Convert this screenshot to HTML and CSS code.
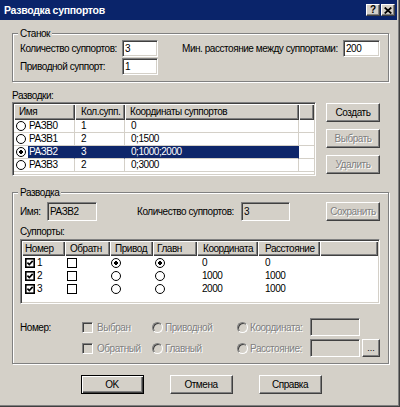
FILE: index.html
```html
<!DOCTYPE html>
<html lang="ru">
<head>
<meta charset="utf-8">
<title>Разводка суппортов</title>
<link rel="stylesheet" href="styles.css">
</head>
<body>
<div class="window">
  <div class="titlebar">
    <span class="title">Разводка суппортов</span>
    <span class="tb-btn help">?</span>
    <span class="tb-btn close"><svg width="8" height="7" viewBox="0 0 8 7"><path d="M0.7 0.5 L7.3 6.5 M7.3 0.5 L0.7 6.5" stroke="#000" stroke-width="1.7" fill="none"/></svg></span>
  </div>

  <div class="content">
    <div class="group stanok">
      <span class="legend">Станок</span>
      <div class="row">
        <span class="lbl w-count">Количество суппортов:</span>
        <span class="edit e-small">3</span>
        <span class="lbl min-dist">Мин. расстояние между суппортами:</span>
        <span class="edit e-dist">200</span>
      </div>
      <div class="row">
        <span class="lbl w-count">Приводной суппорт:</span>
        <span class="edit e-small">1</span>
      </div>
    </div>

    <div class="caption">Разводки:</div>
    <div class="list-area">
      <div class="listview">
        <div class="lv-head">
          <div class="hc">Имя</div>
          <div class="hc hc-count">Кол.супп.</div>
          <div class="hc">Координаты суппортов</div>
          <div class="hc"></div>
        </div>
        <div class="lv-row">
          <div class="c name"><span class="radio"></span><span class="nm">РАЗВ0</span></div>
          <div class="c">1</div><div class="c">0</div><div class="c fill"></div>
        </div>
        <div class="lv-row">
          <div class="c name"><span class="radio"></span><span class="nm">РАЗВ1</span></div>
          <div class="c">2</div><div class="c">0;1500</div><div class="c fill"></div>
        </div>
        <div class="lv-row sel">
          <div class="c name"><span class="radio on"></span><span class="nm">РАЗВ2</span></div>
          <div class="c">3</div><div class="c">0;1000;2000</div><div class="c fill"></div>
        </div>
        <div class="lv-row">
          <div class="c name"><span class="radio"></span><span class="nm">РАЗВ3</span></div>
          <div class="c">2</div><div class="c">0;3000</div><div class="c fill"></div>
        </div>
      </div>
      <div class="btn-col">
        <button class="btn side">Создать</button>
        <button class="btn side dis">Выбрать</button>
        <button class="btn side dis">Удалить</button>
      </div>
    </div>

    <div class="group razv">
      <span class="legend">Разводка</span>
      <div class="row name-row">
        <span class="lbl w-name">Имя:</span>
        <span class="edit ro e-name">РАЗВ2</span>
        <span class="lbl w-cnt2">Количество суппортов:</span>
        <span class="edit ro e-cnt2">3</span>
        <button class="btn side dis save">Сохранить</button>
      </div>
      <div class="caption2">Суппорты:</div>
      <div class="table">
        <div class="tb-head">
          <div class="hc p3">Номер</div>
          <div class="hc p5">Обратн</div>
          <div class="hc p5">Привод</div>
          <div class="hc p4">Главн</div>
          <div class="hc p6">Координата</div>
          <div class="hc p7">Расстояние</div>
          <div class="hc"></div>
        </div>
        <div class="tb-row">
          <div class="t num"><svg class="chk" width="10" height="10" viewBox="0 0 10 10"><rect x="0.8" y="0.8" width="8.4" height="8.4" fill="#fff" stroke="#000" stroke-width="1.6"/><path d="M2.4 4.7 L4.3 6.6 L7.7 2.9" fill="none" stroke="#000" stroke-width="1.7"/></svg>1</div>
          <div class="t p2"><span class="box"></span></div>
          <div class="t p1"><span class="radio on"></span></div>
          <div class="t p2"><span class="radio on"></span></div>
          <div class="t p5">0</div>
          <div class="t p7">0</div>
          <div class="t"></div>
        </div>
        <div class="tb-row">
          <div class="t num"><svg class="chk" width="10" height="10" viewBox="0 0 10 10"><rect x="0.8" y="0.8" width="8.4" height="8.4" fill="#fff" stroke="#000" stroke-width="1.6"/><path d="M2.4 4.7 L4.3 6.6 L7.7 2.9" fill="none" stroke="#000" stroke-width="1.7"/></svg>2</div>
          <div class="t p2"><span class="box"></span></div>
          <div class="t p1"><span class="radio"></span></div>
          <div class="t p2"><span class="radio"></span></div>
          <div class="t p5">1000</div>
          <div class="t p7">1000</div>
          <div class="t"></div>
        </div>
        <div class="tb-row">
          <div class="t num"><svg class="chk" width="10" height="10" viewBox="0 0 10 10"><rect x="0.8" y="0.8" width="8.4" height="8.4" fill="#fff" stroke="#000" stroke-width="1.6"/><path d="M2.4 4.7 L4.3 6.6 L7.7 2.9" fill="none" stroke="#000" stroke-width="1.7"/></svg>3</div>
          <div class="t p2"><span class="box"></span></div>
          <div class="t p1"><span class="radio"></span></div>
          <div class="t p2"><span class="radio"></span></div>
          <div class="t p5">2000</div>
          <div class="t p7">1000</div>
          <div class="t"></div>
        </div>
      </div>

      <div class="opts">
        <span class="lbl">Номер:</span>
        <span class="opt"><span class="dbox"></span><span class="dtext">Выбран</span></span>
        <span class="opt"><span class="dradio"></span><span class="dtext">Приводной</span></span>
        <span class="opt"><span class="dradio"></span><span class="dtext">Координата:</span></span>
        <span class="edit ro e-opt"></span>
        <span></span>

        <span></span>
        <span class="opt"><span class="dbox"></span><span class="dtext">Обратный</span></span>
        <span class="opt"><span class="dradio"></span><span class="dtext">Главный</span></span>
        <span class="opt"><span class="dradio"></span><span class="dtext">Расстояние:</span></span>
        <span class="edit ro e-opt"></span>
        <button class="btn dots">...</button>
      </div>
    </div>

    <div class="dlg-buttons">
      <button class="btn dlg default">OK</button>
      <button class="btn dlg">Отмена</button>
      <button class="btn dlg">Справка</button>
    </div>
  </div>
</div>
</body>
</html>
```

FILE: styles.css
```css
* { box-sizing: border-box; }

html, body {
  margin: 0;
  padding: 0;
  background: #d4d0c8;
}

body {
  font-family: "Liberation Sans", Arial, sans-serif;
  font-size: 10px;
  letter-spacing: -0.45px;
  color: #000;
}

.window {
  width: 400px;
  height: 407px;
  background: #d4d0c8;
  border-right: 1px solid #404040;
  border-bottom: 1px solid #404040;
  box-shadow: inset -1px -1px 0 #808080;
  display: flex;
  flex-direction: column;
}

/* ---------- title bar ---------- */
.titlebar {
  height: 20px;
  margin-right: 2px;
  padding: 0 2px 0 4px;
  background: #0a246a;
  display: flex;
  align-items: center;
}

.title {
  flex: 1;
  color: #fff;
  font-weight: bold;
  font-size: 10.5px;
  letter-spacing: -0.3px;
  line-height: 20px;
}

.tb-btn {
  width: 14px;
  height: 12px;
  background: #d4d0c8;
  border: 1px solid;
  border-color: #fff #404040 #404040 #fff;
  box-shadow: inset -1px -1px 0 #808080;
  display: flex;
  align-items: center;
  justify-content: center;
  font-weight: bold;
  font-size: 10px;
  letter-spacing: 0;
  line-height: 10px;
}

.tb-btn.help { margin-right: 1px; }

/* ---------- content ---------- */
.content {
  padding: 13px 10px 0 12px;
  display: flex;
  flex-direction: column;
}

.group {
  position: relative;
  border: 1px solid #808080;
  box-shadow: inset 1px 1px 0 #fff, 1px 1px 0 #fff;
  padding: 6px 8px 6px 7px;
}

.legend {
  position: absolute;
  top: -7px;
  left: 5px;
  padding: 0 2px;
  line-height: 13px;
  background: #d4d0c8;
}

.row {
  display: flex;
  align-items: center;
}

.lbl { white-space: nowrap; }

.edit {
  display: block;
  background: #fff;
  border: 1px solid;
  border-color: #808080 #fff #fff #808080;
  box-shadow: inset 1px 1px 0 #404040, inset -1px -1px 0 #d4d0c8;
  padding-left: 2px;
  white-space: nowrap;
}

.edit.ro { background: #d4d0c8; }

/* Станок */
.stanok .row { height: 17px; }
.stanok .row + .row { margin-top: 1px; }
.stanok .edit { height: 17px; line-height: 15px; }
.w-count { width: 102px; }
.e-small { width: 36px; }
.min-dist { margin-left: 24px; }
.e-dist { width: 37px; margin-left: auto; }

/* Разводки list */
.caption {
  margin-top: 8px;
  line-height: 12px;
  height: 12px;
}

.list-area {
  display: flex;
  gap: 10px;
  height: 74px;
}

.listview {
  width: 304px;
  height: 74px;
  background: #fff;
  border: 1px solid;
  border-color: #808080 #fff #fff #808080;
  box-shadow: inset 1px 1px 0 #404040, inset -1px -1px 0 #d4d0c8;
  padding: 1px;
}

.lv-head, .lv-row {
  display: grid;
  grid-template-columns: 61px 50px 174px 1fr;
}

.hc {
  background: #d4d0c8;
  box-shadow: inset 1px 1px 0 #fff, inset -1px -1px 0 #404040, inset -2px -2px 0 #808080;
  padding-left: 5px;
  white-space: nowrap;
  overflow: hidden;
}

.lv-head .hc { height: 16px; line-height: 16px; }
.lv-head .hc-count { padding-left: 6px; }

.lv-row { height: 13px; }

.lv-row .c {
  border-right: 1px solid #d4d0c8;
  border-bottom: 1px solid #d4d0c8;
  padding-left: 6px;
  line-height: 12px;
  white-space: nowrap;
  overflow: hidden;
}

.lv-row .c.name {
  display: flex;
  align-items: center;
  padding-left: 2px;
}

.lv-row .c.fill { border-right: none; }

.nm {
  flex: 1;
  height: 12px;
  margin-left: 2px;
  padding-left: 1px;
}

.lv-row.sel .nm,
.lv-row.sel .c:not(.name):not(.fill) {
  background: #0e266a;
  color: #fff;
}

.lv-row.sel .c:not(.fill) { border-right-color: #0e266a; }

.radio {
  display: inline-block;
  flex: none;
  width: 10px;
  height: 10px;
  border: 1.7px solid #000;
  border-radius: 50%;
  background: #fff;
}

.radio.on {
  background: radial-gradient(circle, #000 0 1.6px, #fff 2.1px);
}

.btn {
  font: inherit;
  letter-spacing: inherit;
  color: #000;
  background: #d4d0c8;
  border: 1px solid;
  border-color: #fff #404040 #404040 #fff;
  box-shadow: inset -1px -1px 0 #808080;
  padding: 0;
  margin: 0;
  line-height: 1;
}

.btn.dis {
  color: #808080;
  text-shadow: 1px 1px 0 #fff;
}

.btn-col {
  display: flex;
  flex-direction: column;
  gap: 7px;
  padding-top: 1px;
}

.btn.side { width: 54px; height: 19px; }

/* Разводка group */
.razv {
  margin-top: 16px;
  padding-top: 9px;
  padding-bottom: 6px;
}

.name-row { height: 19px; }
.name-row .edit { height: 19px; line-height: 17px; }
.w-name { width: 27px; }
.e-name { width: 50px; }
.w-cnt2 { width: 104px; margin-left: 40px; }
.e-cnt2 { width: 49px; }
.save { margin-left: auto; }

.caption2 {
  margin-top: 4px;
  height: 14px;
  line-height: 13px;
}

.table {
  height: 65px;
  background: #fff;
  border: 1px solid;
  border-color: #808080 #fff #fff #808080;
  box-shadow: inset 1px 1px 0 #404040, inset -1px -1px 0 #d4d0c8;
  padding: 1px;
}

.tb-head, .tb-row {
  display: grid;
  grid-template-columns: 43px 45px 43px 44px 61px 62px 1fr;
}

.tb-head .hc { height: 15px; line-height: 15px; }

.tb-row { height: 13px; }

.t {
  display: flex;
  align-items: center;
  white-space: nowrap;
  line-height: 13px;
}

.t.num { padding-left: 3px; }
.chk { flex: none; margin-right: 2px; }

.box {
  display: inline-block;
  width: 10px;
  height: 10px;
  border: 1.7px solid #000;
  background: #fff;
}

.p1 { padding-left: 1px; }
.p2 { padding-left: 2px; }
.p3 { padding-left: 3px; }
.p4 { padding-left: 4px; }
.p5 { padding-left: 5px; }
.p6 { padding-left: 6px; }
.p7 { padding-left: 7px; }

/* disabled options */
.opts {
  margin-top: 14px;
  display: grid;
  grid-template-columns: 62px 70px 85px 73px 50px 18px;
  grid-template-rows: 18px 18px;
  column-gap: 0;
  row-gap: 3px;
  align-items: center;
}

.opts .dots { margin-left: 2px; }

.opt {
  display: flex;
  align-items: center;
}

.dbox {
  width: 11px;
  height: 11px;
  flex: none;
  border: 1px solid;
  border-color: #808080 #fff #fff #808080;
  box-shadow: inset 1px 1px 0 #404040, inset -1px -1px 0 #d4d0c8;
  background: #d4d0c8;
  margin-right: 4px;
}

.dradio {
  width: 11px;
  height: 11px;
  flex: none;
  border-radius: 50%;
  border: 1px solid;
  border-color: #808080 #fff #fff #808080;
  box-shadow: inset 1px 1px 0 #404040;
  background: #d4d0c8;
  margin-right: 2px;
}

.dtext {
  color: #808080;
  text-shadow: 1px 1px 0 #fff;
  white-space: nowrap;
}

.e-opt { height: 18px; width: 50px; }

.btn.dots {
  width: 18px;
  height: 18px;
  font-size: 9px;
  letter-spacing: 0;
  line-height: 1;
}

/* dialog buttons */
.dlg-buttons {
  margin-top: 11px;
  display: flex;
  justify-content: center;
  gap: 26px;
  padding-left: 1px;
}

.btn.dlg { width: 63px; height: 19px; }

.btn.default {
  border: 1px solid #000;
  box-shadow: inset 1px 1px 0 #fff, inset -1px -1px 0 #404040, inset -2px -2px 0 #808080;
}
```
